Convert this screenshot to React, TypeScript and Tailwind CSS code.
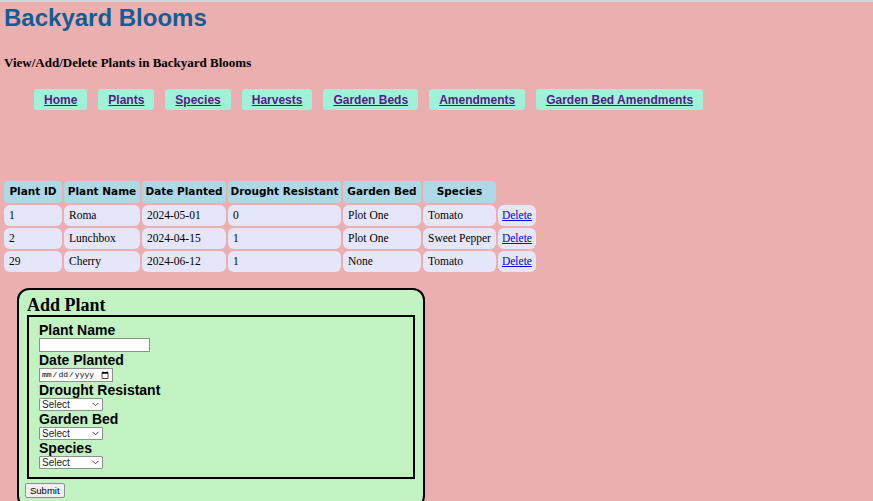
import React from 'react';

type Plant = {
    id: number;
    name: string;
    planted: string;
    drought: number;
    bed: string;
    species: string;
};

const plants: Plant[] = [
    { id: 1, name: 'Roma', planted: '2024-05-01', drought: 0, bed: 'Plot One', species: 'Tomato' },
    { id: 2, name: 'Lunchbox', planted: '2024-04-15', drought: 1, bed: 'Plot One', species: 'Sweet Pepper' },
    { id: 29, name: 'Cherry', planted: '2024-06-12', drought: 1, bed: 'None', species: 'Tomato' },
];

const navLinks = ['Home', 'Plants', 'Species', 'Harvests', 'Garden Beds', 'Amendments', 'Garden Bed Amendments'];

const headers = [
    { label: 'Plant ID', w: 'w-[58px]' },
    { label: 'Plant Name', w: 'w-[76px]' },
    { label: 'Date Planted', w: 'w-[84px]' },
    { label: 'Drought Resistant', w: 'w-[113px]' },
    { label: 'Garden Bed', w: 'w-[78px]' },
    { label: 'Species', w: 'w-[72px]' },
];

function SelectBox() {
    return (
        <div className="relative w-[64px] h-[13px]">
            <select className="appearance-none block w-full h-full bg-white border border-[#8f8f8f] rounded-[1px] text-[10px] leading-[11px] pl-[2px] font-['Liberation_Sans',Arial,sans-serif] text-[#222]">
                <option>Select</option>
            </select>
            {/* chevron */}
            <svg className="absolute right-[4px] top-[4px] pointer-events-none" width="7" height="5" viewBox="0 0 7 5">
                <path d="M0.5 0.8 L3.5 3.8 L6.5 0.8" fill="none" stroke="#444" strokeWidth="1" />
            </svg>
        </div>
    );
}

export default function App() {
    return (
        <div className="min-h-screen bg-[#ecafaf] border-t-2 border-[#d4d4d4] font-['Liberation_Sans',Arial,sans-serif] text-black">
            <h1 className="pl-1 pt-[2px] text-[24px] leading-[28px] font-bold text-[#135c94]">Backyard Blooms</h1>

            <h2 className="pl-1 mt-[23px] text-[13px] leading-[16px] font-bold font-['Liberation_Serif','Times_New_Roman',serif]">
                View/Add/Delete Plants in Backyard Blooms
            </h2>

            {/* nav */}
            <nav className="mt-[18px] pl-[34px] flex gap-[11px]">
                {navLinks.map((l) => (
                    <a
                        key={l}
                        href="#"
                        className="bg-[#a1f1d9] rounded-[3px] px-[10px] h-[21px] flex items-center text-[12px] font-bold text-[#551a8b] underline"
                    >
                        {l}
                    </a>
                ))}
            </nav>

            {/* plants table */}
            <table className="mt-[69px] ml-[2px] table-fixed border-separate border-spacing-[2px] text-[12px]">
                <colgroup>
                    {headers.map((h) => (
                        <col key={h.label} className={h.w} />
                    ))}
                    <col className="w-[38px]" />
                </colgroup>
                <thead>
                    <tr className="h-[22px]">
                        {headers.map((h) => (
                            <th
                                key={h.label}
                                className="h-[22px] bg-[#add8e6] rounded-[4px] px-[2px] text-center font-bold text-[10.5px] font-['DejaVu_Sans',Verdana,sans-serif] whitespace-nowrap"
                            >
                                {h.label}
                            </th>
                        ))}
                        <th />
                    </tr>
                </thead>
                <tbody className="font-['Liberation_Serif','Times_New_Roman',serif]">
                    {plants.map((p) => (
                        <tr key={p.id}>
                            {[p.id, p.name, p.planted, p.drought, p.bed, p.species].map((v, i) => (
                                <td key={i} className="h-[21px] bg-[#e6e6fa] rounded-[6px] px-[5px] whitespace-nowrap text-[11.5px]">
                                    {v}
                                </td>
                            ))}
                            <td className="h-[21px] bg-[#e6e6fa] rounded-[6px] px-[4px] text-[11.5px]">
                                <a href="#" className="text-[#0000ee] underline">Delete</a>
                            </td>
                        </tr>
                    ))}
                </tbody>
            </table>

            {/* add form */}
            <div className="mt-[14px] ml-[17px] w-[408px] bg-[#c2f2c2] border-2 border-black rounded-[12px] pl-[6px] pr-[8px] pt-[5px] pb-[8px]">
                <h3 className="pl-[2px] text-[18px] leading-[20px] font-bold font-['Liberation_Serif','Times_New_Roman',serif]">Add Plant</h3>
                <fieldset className="ml-[2px] border-2 border-black px-[10px] pt-[6px] pb-[8px]">
                    <label className="block text-[14px] leading-[15px] font-bold">Plant Name</label>
                    <input type="text" className="block w-[111px] h-[14px] bg-white border border-[#8f8f8f]" />
                    <label className="block mt-[1px] text-[14px] leading-[15px] font-bold">Date Planted</label>
                    <input
                        type="date"
                        className="block w-[74px] h-[14px] bg-white border border-[#8f8f8f] text-[8px] leading-[10px] px-[1px] font-['Liberation_Mono',monospace]"
                    />
                    <label className="block mt-[1px] text-[14px] leading-[15px] font-bold">Drought Resistant</label>
                    <SelectBox />
                    <label className="block mt-[1px] text-[14px] leading-[15px] font-bold">Garden Bed</label>
                    <SelectBox />
                    <label className="block mt-[1px] text-[14px] leading-[15px] font-bold">Species</label>
                    <SelectBox />
                </fieldset>
                <button className="block mt-[4px] h-[15px] px-[4px] text-[9.5px] leading-[13px] bg-[#efefef] border border-[#8f8f8f] rounded-[2px]">
                    Submit
                </button>
            </div>
        </div>
    );
}
